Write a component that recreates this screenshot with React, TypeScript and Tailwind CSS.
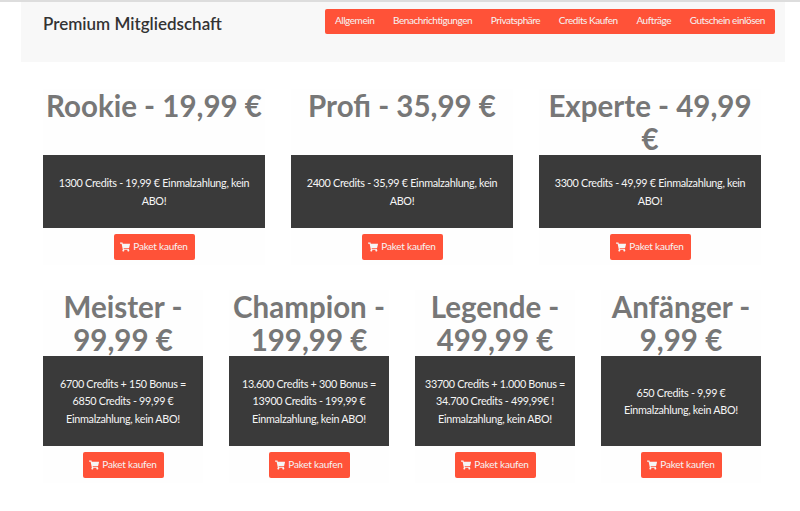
import React from "react";
import { FaShoppingCart } from "react-icons/fa";

const navItems = [
  "Allgemein",
  "Benachrichtigungen",
  "Privatsphäre",
  "Credits Kaufen",
  "Aufträge",
  "Gutschein einlösen",
];

const topPackages = [
  { title: "Rookie - 19,99 €", text: "1300 Credits - 19,99 € Einmalzahlung, kein ABO!" },
  { title: "Profi - 35,99 €", text: "2400 Credits - 35,99 € Einmalzahlung, kein ABO!" },
  { title: "Experte - 49,99 €", text: "3300 Credits - 49,99 € Einmalzahlung, kein ABO!" },
];

const bottomPackages = [
  { title: "Meister - 99,99 €", text: "6700 Credits + 150 Bonus = 6850 Credits - 99,99 € Einmalzahlung, kein ABO!" },
  { title: "Champion - 199,99 €", text: "13.600 Credits + 300 Bonus = 13900 Credits - 199,99 € Einmalzahlung, kein ABO!" },
  { title: "Legende - 499,99 €", text: "33700 Credits + 1.000 Bonus = 34.700 Credits - 499,99€ ! Einmalzahlung, kein ABO!" },
  { title: "Anfänger - 9,99 €", text: "650 Credits - 9,99 € Einmalzahlung, kein ABO!" },
];

type PackageProps = { title: string; text: string; tall?: boolean };

const Package: React.FC<PackageProps> = ({ title, text, tall }) => (
  <div className="bg-[#fefefe] pb-[5px]">
    <h2 className="h-[66px] text-center text-[29.5px] leading-[33px] font-bold text-[#777777]">
      {title}
    </h2>
    <div
      className={`flex items-center justify-center bg-[#3a3a3a] px-[8px] text-center text-[10.8px] leading-[17.3px] tracking-[-0.3px] text-[#f5f5f5] ${
        tall ? "h-[90px]" : "h-[73px]"
      }`}
    >
      <p>{text}</p>
    </div>
    <div className="mt-[6px] flex justify-center">
      <button className="flex h-[26px] w-[81px] items-center justify-center gap-[3px] rounded-[2px] bg-[#ff5238] pb-[1px] text-[10px] tracking-[-0.2px] text-[#f5f5f5]">
        <FaShoppingCart className="text-[10px]" />
        Paket kaufen
      </button>
    </div>
  </div>
);

export default function App() {
  return (
    <div className="h-[511px] overflow-hidden bg-white font-['Lato',sans-serif]">
      <div className="h-[2px] bg-[#dddddd]" />
      <header className="mx-[21px] flex h-[60px] w-[764px] items-start justify-between bg-[#f8f8f8] pt-[7px] pr-[10px] pl-[22px]">
        <h1 className="mt-[3px] text-[17px] leading-[24px] font-semibold text-[#333333]">
          Premium Mitgliedschaft
        </h1>
        <nav className="flex h-[25px] w-[450px] items-center justify-between rounded-[2px] bg-[#ff5238] px-[10px] pb-[2px] text-[10px] tracking-[-0.45px] text-[#f5f5f5]">
          {navItems.map((item) => (
            <span key={item}>{item}</span>
          ))}
        </nav>
      </header>

      <main className="mx-[43px] w-[718px] pt-[27px]">
        <section className="grid grid-cols-3 gap-x-[26px]">
          {topPackages.map((p) => (
            <Package key={p.title} title={p.title} text={p.text} />
          ))}
        </section>
        <section className="mt-[25px] grid grid-cols-4 gap-x-[26px]">
          {bottomPackages.map((p) => (
            <Package key={p.title} title={p.title} text={p.text} tall />
          ))}
        </section>
      </main>
    </div>
  );
}
